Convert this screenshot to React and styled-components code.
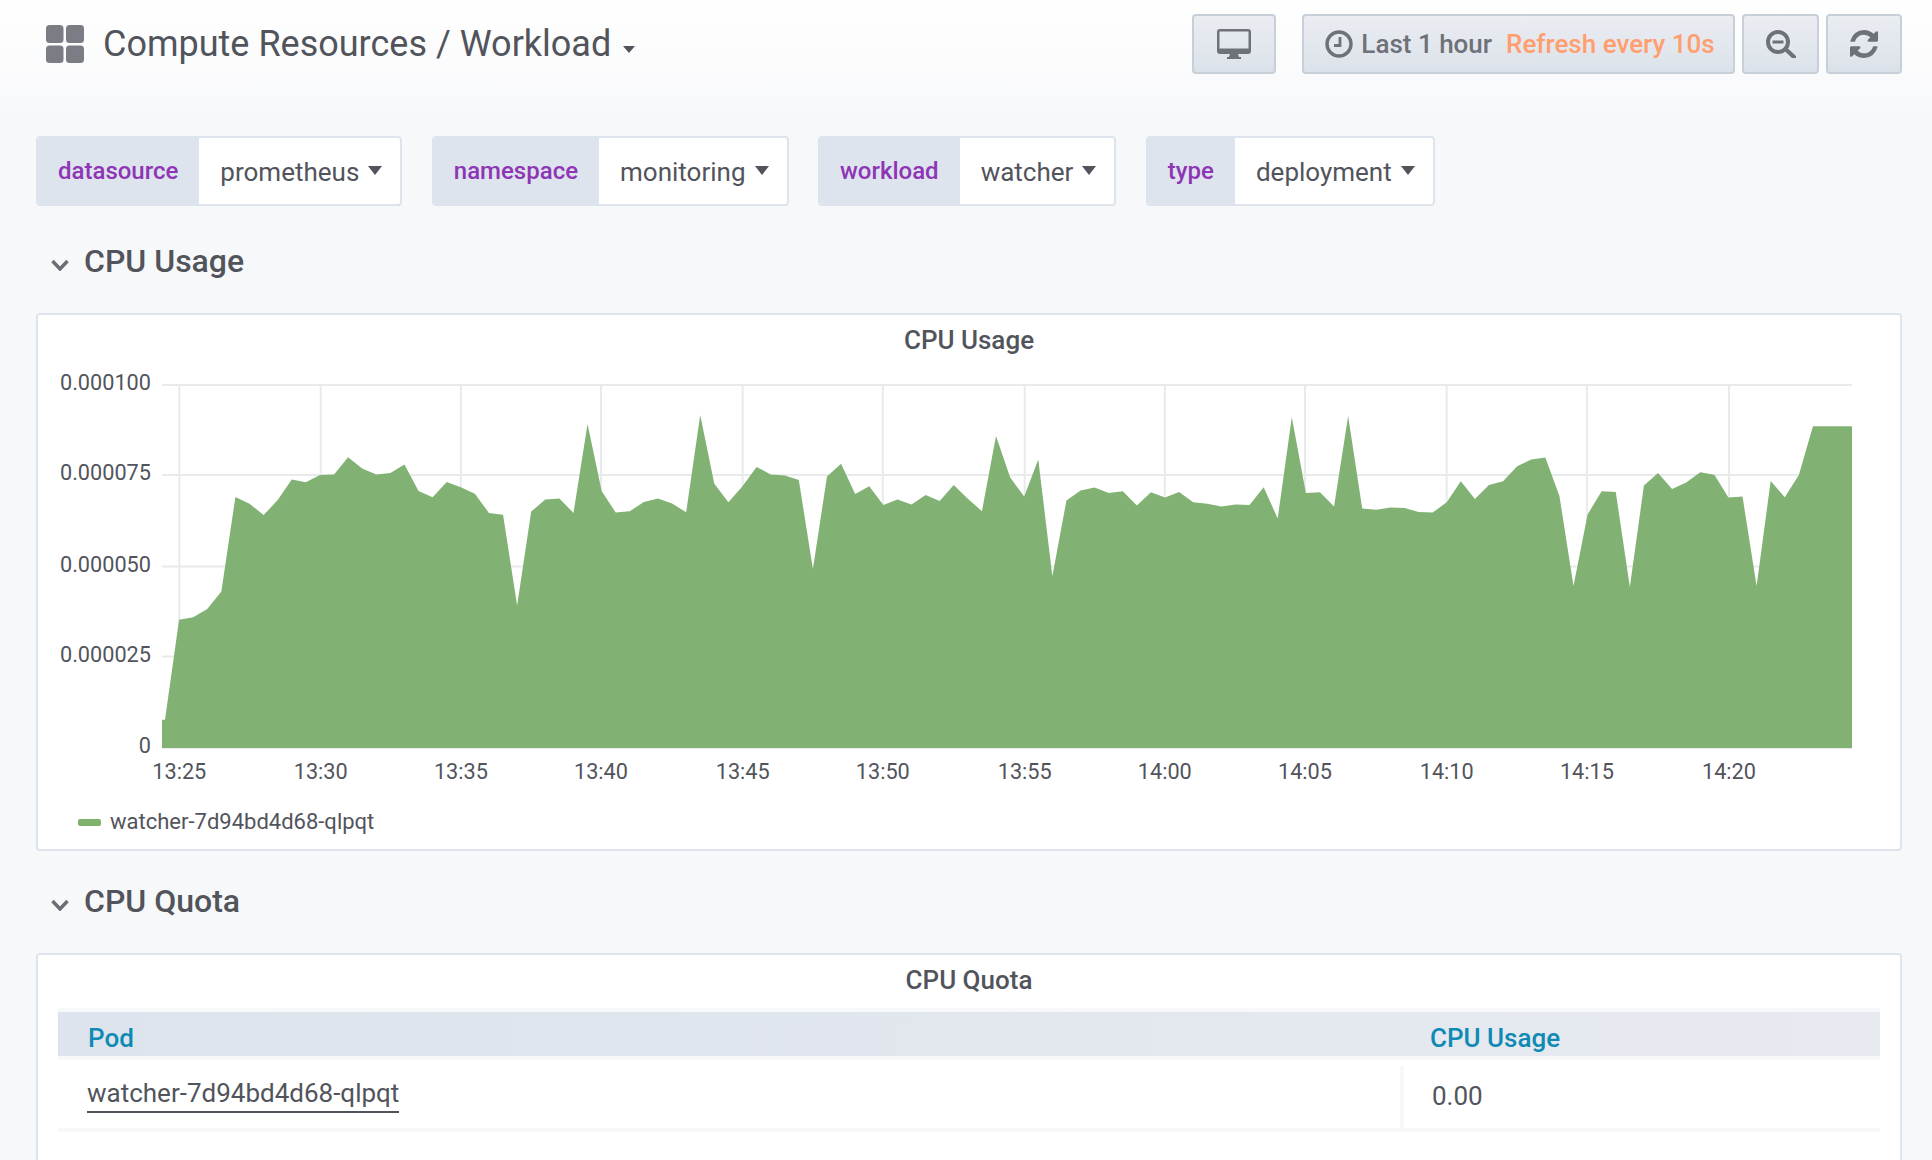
import React from "react";
import styled, { createGlobalStyle } from "styled-components";

const GlobalStyle = createGlobalStyle`
  html, body {
    margin: 0;
    padding: 0;
    height: 100%;
    overflow: hidden;
    background: #f7f8fa;
    font-family: Roboto, "Liberation Sans", sans-serif;
    color: #52545c;
  }
`;

const Page = styled.div`
  width: 1932px;
  height: 1160px;
  overflow: hidden;
  box-sizing: border-box;
  padding: 0 30px 0 36px;
  background: linear-gradient(180deg, #ffffff 0, #f7f8fa 125px);
`;

const Navbar = styled.div`
  display: flex;
  align-items: center;
  height: 87px;
`;

const GridMark = styled.svg`
  width: 38px;
  height: 38px;
  margin: 0 19px 0 10px;
  flex: none;
`;

const DashTitle = styled.div`
  font-size: 36px;
  color: #52545c;
  white-space: nowrap;
`;

const TitleCaret = styled.span`
  display: inline-block;
  margin-left: 12px;
  border-top: 7px solid #52545c;
  border-left: 6px solid transparent;
  border-right: 6px solid transparent;
  vertical-align: 3px;
`;

const NavActions = styled.div`
  margin-left: auto;
  display: flex;
  gap: 7px;
`;

const NavButton = styled.div`
  box-sizing: border-box;
  height: 60px;
  width: ${(p) => p.$width};
  margin-right: ${(p) => p.$gapRight || 0};
  padding-left: ${(p) => p.$shift || 0};
  display: flex;
  align-items: center;
  justify-content: center;
  gap: 14px;
  border: 2px solid #c7d0d9;
  border-radius: 4px;
  background: linear-gradient(180deg, #eaedf2, #dce2ea);
  color: #6f7178;
  font-size: 26px;
  font-weight: 500;
  white-space: nowrap;
`;

const NavIcon = styled.svg`
  flex: none;
  fill: none;
  stroke: #6f7178;
  margin-right: ${(p) => p.$pull || 0};
`;

const RefreshLabel = styled.span`
  color: #ff9e6e;
`;

const VarRow = styled.div`
  display: flex;
  gap: 29.5px;
  margin-top: 49px;
`;

const VarGroup = styled.div`
  display: flex;
  height: 70px;
  box-sizing: border-box;
  border: 2px solid #dde4ed;
  border-radius: 4px;
  background: #fff;
  overflow: hidden;
`;

const VarLabel = styled.div`
  display: flex;
  align-items: center;
  padding: 0 21px 0 20px;
  background: #dde4ed;
  color: #8e35b5;
  font-size: 24px;
  font-weight: 500;
`;

const VarValue = styled.div`
  display: flex;
  align-items: center;
  gap: 9px;
  padding: 2px 18px 0 21px;
  font-size: 26px;
  color: #52545c;
`;

const ValueCaret = styled.span`
  width: 0;
  height: 0;
  margin-top: -3px;
  border-top: 9px solid #52545c;
  border-left: 7px solid transparent;
  border-right: 7px solid transparent;
`;

const RowHeader = styled.div`
  display: flex;
  align-items: center;
  box-sizing: border-box;
  height: ${(p) => p.$height};
  padding: ${(p) => p.$padTop || 0} 0 ${(p) => p.$padBottom || 0} 15px;
  gap: 15px;
  font-size: 32px;
  font-weight: 500;
  color: #52545c;
`;

const Chevron = styled.svg`
  width: 18px;
  height: 12px;
  margin-top: 9px;
  fill: none;
  stroke: #6b6d75;
  stroke-width: 3.4;
`;

const Panel = styled.div`
  box-sizing: border-box;
  height: ${(p) => p.$height};
  border: 2px solid #dde4ed;
  border-radius: 4px;
  background: #fff;
`;

const PanelTitle = styled.div`
  text-align: center;
  font-size: 26px;
  font-weight: 500;
  color: #52545c;
  padding-top: 9px;
  line-height: 32px;
`;

const ChartWrap = styled.svg`
  display: block;
`;

const AxisText = styled.text`
  font-family: Roboto, "Liberation Sans", sans-serif;
  font-size: 21.7px;
  fill: #52545c;
`;

const Legend = styled.div`
  display: flex;
  align-items: center;
  gap: 9px;
  padding-left: 40px;
  margin-top: 8px;
  font-size: 22px;
  line-height: 26px;
  color: #52545c;
`;

const LegendSwatch = styled.span`
  width: 23px;
  height: 7px;
  border-radius: 2px;
  background: #7eb26d;
`;

const QuotaTable = styled.div`
  margin: 12px 20px 0;
`;

const HeaderRow = styled.div`
  display: grid;
  grid-template-columns: 1342px 1fr;
  height: 44px;
  border-top: 4px solid #f7f8fa;
  border-bottom: 4px solid #f7f8fa;
  background: linear-gradient(90deg, #dde4ed, #e7eaf0);
  color: #0e8ab5;
  font-size: 26px;
  font-weight: 500;
`;

const HeaderCell = styled.div`
  padding: 11px 0 0 30px;
`;

const BodyRow = styled.div`
  display: grid;
  grid-template-columns: 1342px 1fr;
  height: 68px;
  border-bottom: 4px solid #f7f8fa;
  font-size: 26px;
  color: #52545c;
`;

const PodCell = styled.div`
  display: flex;
  align-items: flex-start;
  padding: 17px 0 0 29px;
`;

const ValueCell = styled.div`
  margin-top: 6px;
  padding: 15px 0 0 28px;
  border-left: 4px solid #f7f8fa;
`;

const PodLink = styled.span`
  border-bottom: 2px solid #52545c;
  line-height: 33px;
  padding-bottom: 1px;
`;

// heights of the area above the baseline, one sample per 14.085px
const samples = [
  28.2, 128.2, 130.7, 138.9, 156.4, 251.1, 244.3, 232.9, 247.9, 268.6, 265.7, 272.9, 273.6, 290.7, 279.6, 273.6,
  275, 283.6, 257.1, 250.7, 266.1, 260.7, 254.3, 235, 233.2, 142.5, 236.4, 248.6, 249.6, 235, 323.9, 257.1,
  235.4, 236.8, 246.1, 249.6, 244.6, 235.7, 332.9, 264.3, 245.7, 261.8, 281.1, 273.6, 272.5, 267.9, 178.9, 271.4,
  284.3, 253.9, 261.8, 242.9, 248.6, 243.6, 252.9, 247.1, 262.9, 249.3, 236.8, 312.1, 270.7, 251.4, 288.6, 171.8,
  247.5, 257.5, 260.4, 255, 256.8, 242.5, 255.7, 250.4, 256.1, 245.7, 244.3, 241.4, 243.6, 242.9, 260.7, 229.6,
  330.7, 255, 255.7, 241.4, 332.1, 239.6, 238.2, 240.4, 240, 236.1, 235.4, 245.7, 266.8, 248.9, 262.9, 266.8,
  281.8, 288.6, 290.4, 252.1, 162.1, 233.6, 256.8, 256.1, 161.1, 262.5, 275, 258.9, 265.4, 275.7, 273.2, 250.4,
  251.4, 162.1, 267.1, 250.7, 272.9, 321.8,
];

// the svg starts at the panel's inner left edge and under the panel title
const ORIGIN_X = 38;
const ORIGIN_Y = 356;
const BASE = 748 - ORIGIN_Y;
const LEFT = 162 - ORIGIN_X;
const RIGHT = 1852 - ORIGIN_X;

const yTicks = [
  { label: "0.000100", y: 385 },
  { label: "0.000075", y: 475 },
  { label: "0.000050", y: 566.5 },
  { label: "0.000025", y: 656.5 },
  { label: "0", y: 748 },
];

const xTicks = [
  ["13:25", 179.3], ["13:30", 320.7], ["13:35", 460.9], ["13:40", 601], ["13:45", 742.7], ["13:50", 882.8],
  ["13:55", 1024.7], ["14:00", 1164.8], ["14:05", 1305], ["14:10", 1446.7], ["14:15", 1586.9], ["14:20", 1729],
];

function areaPoints() {
  const pts = samples.map((h, i) => `${165 + i * 14.085 - ORIGIN_X},${BASE - h}`);
  return [`${LEFT},${BASE}`, `${LEFT},${BASE - 28.2}`, ...pts, `${RIGHT},${BASE - 321.8}`, `${RIGHT},${BASE}`].join(" ");
}

function UsageChart() {
  return (
    <ChartWrap width="1860" height="445" viewBox="0 0 1860 445">
      {yTicks.map((t) => (
        <g key={t.label}>
          <line x1={LEFT} x2={RIGHT} y1={t.y - ORIGIN_Y} y2={t.y - ORIGIN_Y} stroke="#e9eaec" strokeWidth="2" />
          <AxisText x={LEFT - 11} y={t.y - ORIGIN_Y + 5} textAnchor="end">{t.label}</AxisText>
        </g>
      ))}
      {xTicks.map(([label, x]) => (
        <g key={label}>
          <line x1={x - ORIGIN_X} x2={x - ORIGIN_X} y1={385 - ORIGIN_Y} y2={BASE} stroke="#e9eaec" strokeWidth="2" />
          <AxisText x={x - ORIGIN_X} y={BASE + 31} textAnchor="middle">{label}</AxisText>
        </g>
      ))}
      <polygon points={areaPoints()} fill="#81b274" />
    </ChartWrap>
  );
}

function RowChevron() {
  return (
    <Chevron viewBox="0 0 18 12">
      <path d="M1.5 2 L9 10 L16.5 2" />
    </Chevron>
  );
}

function MonitorIcon() {
  return (
    <NavIcon width="34" height="30" viewBox="0 0 34 30">
      <path
        fill="#6f7178"
        stroke="none"
        fillRule="evenodd"
        d="M3 0h28a3 3 0 0 1 3 3v19a3 3 0 0 1-3 3H21l1 3h2v2H10v-2h2l1-3H3a3 3 0 0 1-3-3V3a3 3 0 0 1 3-3zM2.5 2.5v17h29v-17z"
      />
    </NavIcon>
  );
}

function ClockIcon() {
  return (
    <NavIcon width="28" height="28" viewBox="0 0 28 28" $pull="-6px">
      <circle cx="14" cy="14" r="12" strokeWidth="3.4" />
      <path d="M15 7v8.5H9" strokeWidth="2.8" />
    </NavIcon>
  );
}

function ZoomOutIcon() {
  return (
    <NavIcon width="30" height="28" viewBox="0 0 30 28">
      <circle cx="12" cy="12" r="10" strokeWidth="4" />
      <path d="M6.5 12h11" strokeWidth="3" />
      <path d="M19.5 19 L28 27" strokeWidth="4.2" strokeLinecap="round" />
    </NavIcon>
  );
}

function RefreshIcon() {
  return (
    <NavIcon width="28" height="28" viewBox="128 128 1536 1536">
      <path
        fill="#6f7178"
        stroke="none"
        d="M1639 1056q0 5-1 7-64 268-268 434.5t-478 166.5q-146 0-282.5-55t-243.5-157l-129 129q-19 19-45 19t-45-19-19-45v-448q0-26 19-45t45-19h448q26 0 45 19t19 45-19 45l-137 137q71 66 161 102t187 36q134 0 250-65t186-179q11-17 53-117 8-23 30-23h192q13 0 22.5 9.5t9.5 22.5zm25-800v448q0 26-19 45t-45 19h-448q-26 0-45-19t-19-45 19-45l138-138q-148-137-349-137-134 0-250 65t-186 179q-11 17-53 117-8 23-30 23h-199q-13 0-22.5-9.5t-9.5-22.5v-7q65-268 270-434.5t480-166.5q146 0 284 55.5t245 156.5l130-129q19-19 45-19t45 19 19 45z"
      />
    </NavIcon>
  );
}

export default function App() {
  return (
    <Page>
      <GlobalStyle />
      <Navbar>
        <GridMark viewBox="0 0 38 38">
          <rect x="0" y="0" width="17.5" height="18" rx="3.5" fill="#7b7d85" />
          <rect x="20" y="0" width="18" height="18" rx="3.5" fill="#7b7d85" />
          <rect x="0" y="20.5" width="17.5" height="17.5" rx="3.5" fill="#7b7d85" />
          <rect x="20" y="20.5" width="18" height="17.5" rx="3.5" fill="#7b7d85" />
        </GridMark>
        <DashTitle>
          Compute Resources / Workload<TitleCaret />
        </DashTitle>
        <NavActions>
          <NavButton $width="84px" $gapRight="19px"><MonitorIcon /></NavButton>
          <NavButton $width="433px" $shift="3px">
            <ClockIcon />
            Last 1 hour
            <RefreshLabel>Refresh every 10s</RefreshLabel>
          </NavButton>
          <NavButton $width="77px"><ZoomOutIcon /></NavButton>
          <NavButton $width="76px"><RefreshIcon /></NavButton>
        </NavActions>
      </Navbar>
      <VarRow>
        <VarGroup><VarLabel>datasource</VarLabel><VarValue>prometheus<ValueCaret /></VarValue></VarGroup>
        <VarGroup><VarLabel>namespace</VarLabel><VarValue>monitoring<ValueCaret /></VarValue></VarGroup>
        <VarGroup><VarLabel>workload</VarLabel><VarValue>watcher<ValueCaret /></VarValue></VarGroup>
        <VarGroup><VarLabel>type</VarLabel><VarValue>deployment<ValueCaret /></VarValue></VarGroup>
      </VarRow>
      <RowHeader $height="107px" $padTop="2px"><RowChevron />CPU Usage</RowHeader>
      <Panel $height="538px">
        <PanelTitle>CPU Usage</PanelTitle>
        <UsageChart />
        <Legend><LegendSwatch />watcher-7d94bd4d68-qlpqt</Legend>
      </Panel>
      <RowHeader $height="102px" $padBottom="3px"><RowChevron />CPU Quota</RowHeader>
      <Panel $height="300px">
        <PanelTitle>CPU Quota</PanelTitle>
        <QuotaTable>
          <HeaderRow>
            <HeaderCell>Pod</HeaderCell>
            <HeaderCell>CPU Usage</HeaderCell>
          </HeaderRow>
          <BodyRow>
            <PodCell><PodLink>watcher-7d94bd4d68-qlpqt</PodLink></PodCell>
            <ValueCell>0.00</ValueCell>
          </BodyRow>
        </QuotaTable>
      </Panel>
    </Page>
  );
}
